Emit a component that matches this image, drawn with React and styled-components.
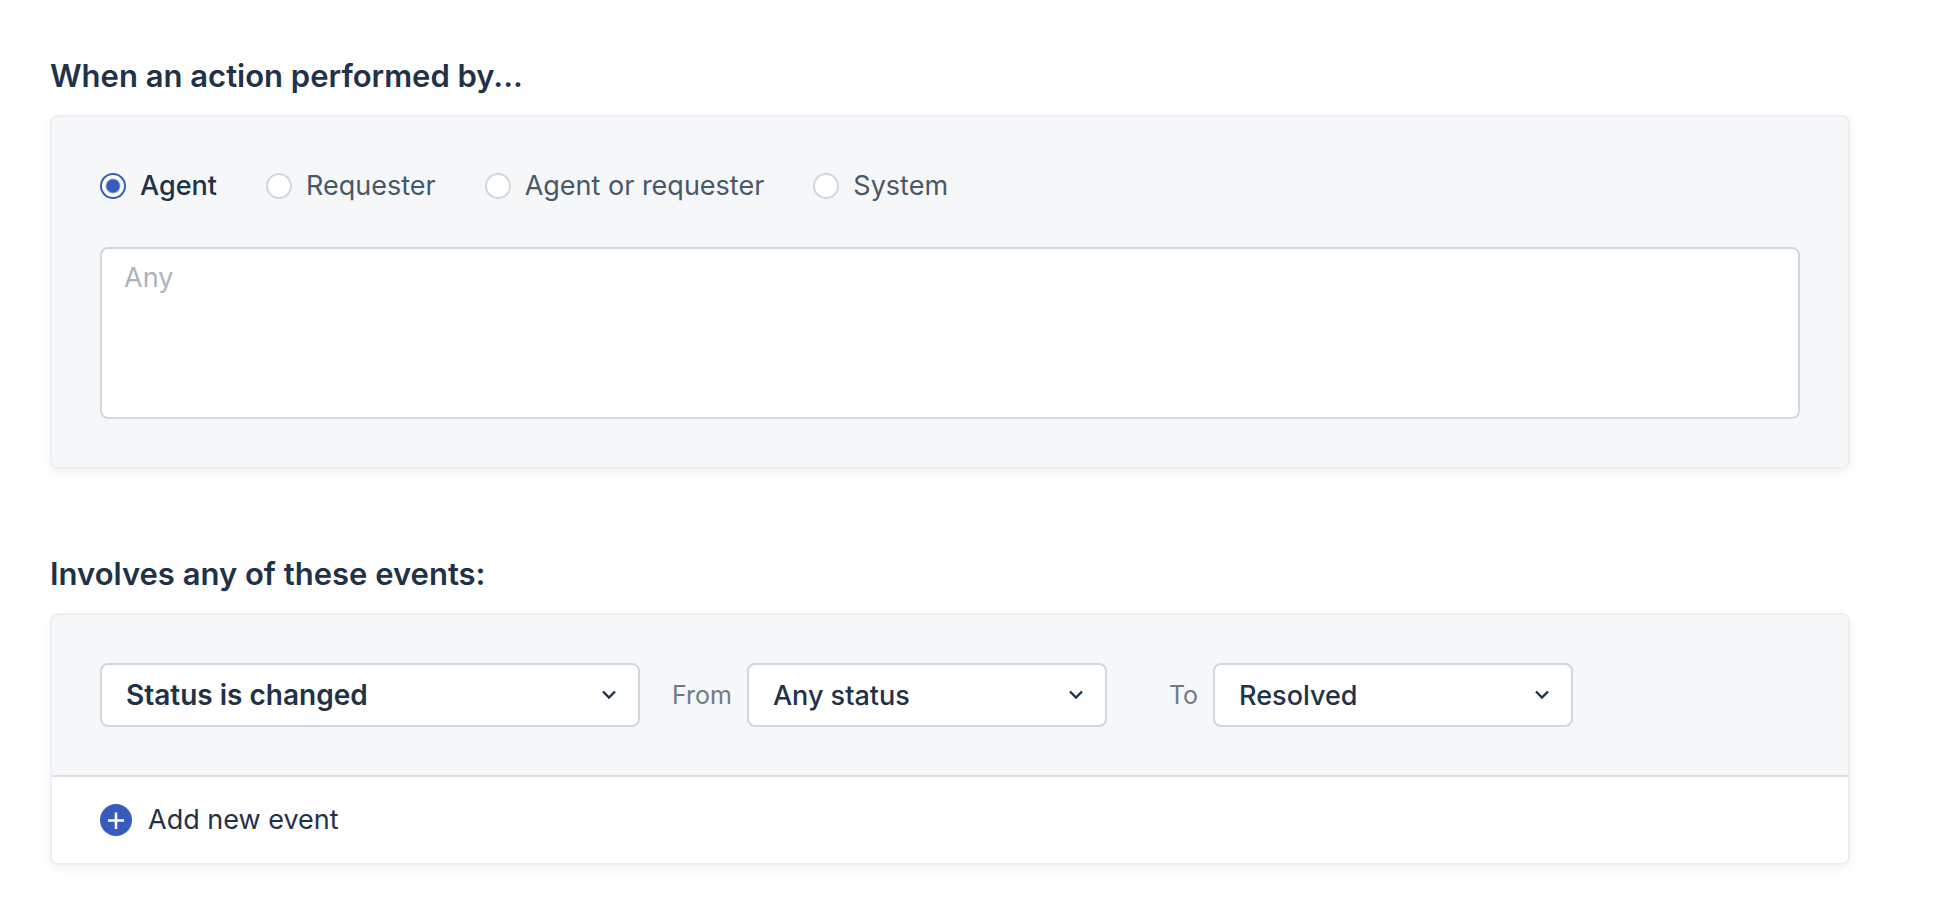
import styled, { createGlobalStyle } from "styled-components";
import { useState } from "react";

const performers = ["Agent", "Requester", "Agent or requester", "System"];

export default function App () {
    const [performer, setPerformer] = useState("Agent");
    const [people, setPeople] = useState("");

    return(
        <>
            <GlobalStyle />
            <Page>
                <Section>
                    <Title id="performer-title">When an action performed by...</Title>
                    <Card>
                        <Panel>
                            <RadioGroup role="radiogroup" aria-labelledby="performer-title">
                                {performers.map(name => (
                                    <RadioLabel key={name} $active={name === performer}>
                                        <Radio
                                        type="radio"
                                        name="performer"
                                        value={name}
                                        checked={name === performer}
                                        onChange={e => setPerformer(e.target.value)} />
                                        {name}
                                    </RadioLabel>
                                ))}
                            </RadioGroup>
                            <People
                            aria-labelledby="performer-title"
                            value={people}
                            onChange={e => setPeople(e.target.value)}
                            placeholder="Any" />
                        </Panel>
                    </Card>
                </Section>
                <Section>
                    <Title>Involves any of these events:</Title>
                    <Card>
                        <EventRow>
                            <Dropdown
                            $width="540px"
                            $bold
                            label="Event"
                            options={["Status is changed", "Priority is changed", "Note is added"]} />
                            <Field>
                                <FieldLabel htmlFor="from">From</FieldLabel>
                                <Dropdown id="from" options={["Any status", "Open", "Pending", "Resolved"]} />
                            </Field>
                            <Field $spaced>
                                <FieldLabel htmlFor="to">To</FieldLabel>
                                <Dropdown id="to" options={["Resolved", "Any status", "Open", "Pending"]} />
                            </Field>
                        </EventRow>
                        <AddButton type="button">
                            <PlusIcon />
                            Add new event
                        </AddButton>
                    </Card>
                </Section>
            </Page>
        </>
    )
}

function Dropdown ({ id, label, options, $width = "360px", $bold }) {
    return(
        <SelectBox $width={$width}>
            <Select id={id} aria-label={label} $bold={$bold}>
                {options.map(option => <option key={option}>{option}</option>)}
            </Select>
            <Chevron viewBox="0 0 16 16" aria-hidden="true">
                <path d="M2 4.5 L8 10.5 L14 4.5" />
            </Chevron>
        </SelectBox>
    )
}

function PlusIcon () {
    return(
        <Plus viewBox="0 0 32 32" aria-hidden="true">
            <circle cx="16" cy="16" r="16" />
            <path d="M8 16.5H24M16 8.5V25" />
        </Plus>
    )
}

const GlobalStyle = createGlobalStyle`
    *{
        box-sizing: border-box;
    }

    body{
        margin: 0;
        background-color: #FFFFFF;
        color: #1F3248;
        font-family: Inter, "Liberation Sans", sans-serif;
        font-size: 27px;
    }

    button, select, textarea{
        font: inherit;
        color: inherit;
    }
`;

const Page = styled.main`
    display: flex;
    flex-direction: column;
    gap: 84px;
    padding: 55px 94px 47px 50px;
`;

const Section = styled.section`
    display: flex;
    flex-direction: column;
    gap: 18px;
`;

const Title = styled.h2`
    margin: 0;
    font-size: 31px;
    font-weight: 600;
    line-height: 42px;
`;

const Card = styled.div`
    border: 2px solid #EBEEF3;
    border-radius: 8px;
    background-color: #FFFFFF;
    box-shadow: 0px 4px 10px rgba(0, 0, 0, 0.05);
    overflow: hidden;
`;

const Panel = styled.div`
    display: flex;
    flex-direction: column;
    gap: 40px;
    padding: 48px;
    background-color: #F5F7F9;
`;

const RadioGroup = styled.div`
    display: flex;
    flex-wrap: wrap;
    column-gap: 49px;
`;

const RadioLabel = styled.label`
    display: flex;
    align-items: center;
    gap: 14px;
    line-height: 42px;
    font-weight: ${props => props.$active ? 500 : 400};
    color: ${props => props.$active ? "#1F3248" : "#475867"};
    cursor: pointer;
`;

const Radio = styled.input`
    appearance: none;
    flex-shrink: 0;
    width: 26px;
    height: 26px;
    margin: 0;
    border: 2px solid #CFD7DF;
    border-radius: 50%;
    background-color: #FFFFFF;
    cursor: pointer;

    &:checked{
        border-color: #375CBE;
        background: radial-gradient(circle, #375CBE 6px, #FFFFFF 8px);
    }
`;

const People = styled.textarea`
    display: block;
    width: 100%;
    height: 172px;
    padding: 8px 22px;
    border: 2px solid #CFD7DF;
    border-radius: 8px;
    background-color: #FFFFFF;
    line-height: 42px;
    resize: none;
    outline: 0;

    &::placeholder{
        color: #ABB4BD;
        opacity: 1;
    }
`;

const EventRow = styled.div`
    display: flex;
    align-items: center;
    gap: 32px;
    padding: 48px;
    border-bottom: 2px solid #DADFE4;
    background-color: #F5F7F9;
`;

const Field = styled.div`
    display: flex;
    align-items: center;
    gap: 15px;
    min-width: 0;
    margin-left: ${props => props.$spaced ? "30px" : "0"};
`;

const FieldLabel = styled.label`
    font-size: 25px;
    color: #6F7C87;
`;

const SelectBox = styled.div`
    position: relative;
    flex: 0 1 ${props => props.$width};
    width: ${props => props.$width};
    min-width: 0;
`;

const Select = styled.select`
    appearance: none;
    display: block;
    width: 100%;
    height: 64px;
    padding: 0 56px 0 24px;
    border: 2px solid #CFD7DF;
    border-radius: 8px;
    background-color: #FFFFFF;
    font-size: ${props => props.$bold ? "28px" : "27px"};
    font-weight: ${props => props.$bold ? 600 : 500};
    outline: 0;
    cursor: pointer;
`;

/* sits over the select, clicks go through to it */
const Chevron = styled.svg`
    position: absolute;
    top: 24px;
    right: 23px;
    width: 16px;
    height: 16px;
    fill: none;
    stroke: #1F3248;
    stroke-width: 2.4;
    pointer-events: none;
`;

const AddButton = styled.button`
    display: flex;
    align-items: center;
    gap: 16px;
    width: 100%;
    padding: 27px 48px;
    border: 0;
    background-color: #FFFFFF;
    line-height: 32px;
    text-align: left;
    cursor: pointer;
`;

const Plus = styled.svg`
    flex-shrink: 0;
    width: 32px;
    height: 32px;
    fill: #375CBE;

    path{
        fill: none;
        stroke: #FFFFFF;
        stroke-width: 2.5;
    }
`;
